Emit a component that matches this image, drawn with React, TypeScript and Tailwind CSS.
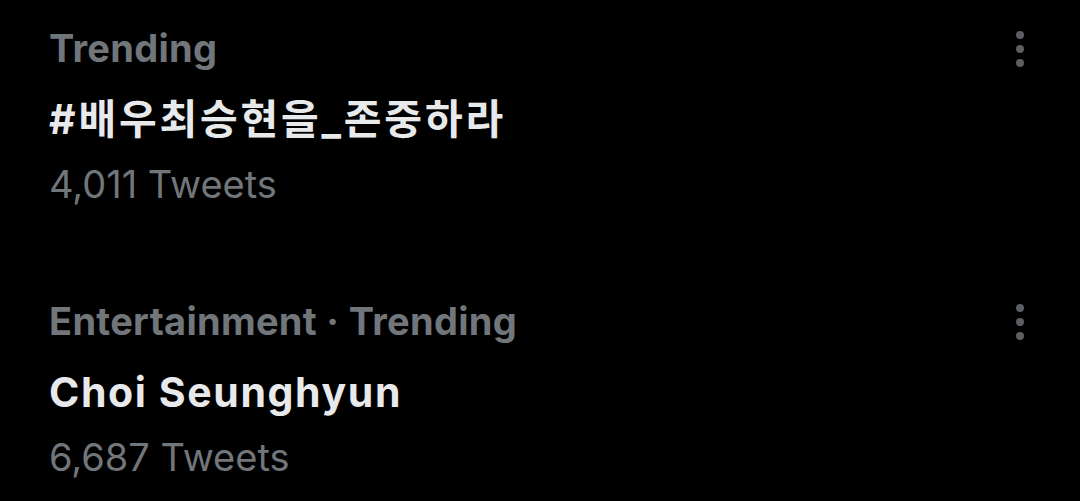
import React from "react";

interface ITrendProps {
  label: string;
  title: string;
  count: string;
  korean?: boolean;
}

const MoreIcon: React.FC = () => (
  <svg width="20" height="44" viewBox="0 0 20 44" className="fill-[#5b5f63]">
    <circle cx="10" cy="8" r="4" />
    <circle cx="10" cy="22" r="4" />
    <circle cx="10" cy="36" r="4" />
  </svg>
);

const Trend: React.FC<ITrendProps> = ({ label, title, count, korean }) => (
  <div className="flex justify-between">
    <div className="flex flex-col">
      <span className="text-[38px] leading-[46px] font-bold text-[#71767b] tracking-[0.3px]">
        {label}
      </span>
      <span
        className={
          korean
            ? "mt-[23px] text-[41px] leading-[50px] font-bold text-[#e7e9ea] tracking-[2.8px]"
            : "mt-[23px] text-[41px] leading-[50px] font-bold text-[#e7e9ea] tracking-[1.6px]"
        }
      >
        {title}
      </span>
      <span className="mt-[17px] text-[38px] leading-[46px] text-[#71767b]">
        {count}
      </span>
    </div>
    <div className="mr-[50px] mt-[2px]">
      <MoreIcon />
    </div>
  </div>
);

export default function App() {
  return (
    <div
      className="w-[1080px] h-[501px] bg-black pl-[49px] pt-[25px] flex flex-col gap-[91px] overflow-hidden"
      style={{ fontFamily: "Inter, 'Noto Sans CJK KR', sans-serif" }}
    >
      <Trend
        label="Trending"
        title="#배우최승현을_존중하라"
        count="4,011 Tweets"
        korean
      />
      <Trend
        label="Entertainment · Trending"
        title="Choi Seunghyun"
        count="6,687 Tweets"
      />
    </div>
  );
}
